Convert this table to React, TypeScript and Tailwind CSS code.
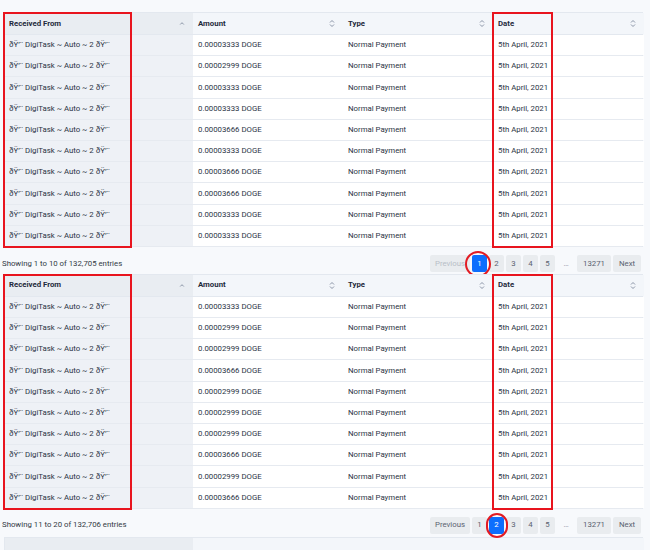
import React from "react";

const NAME = "ðŸ’¨ DigiTask ~ Auto ~ 2 ðŸ’¨";

const blocks = [
	{
		amounts: ["3333", "2999", "3333", "3333", "3666", "3333", "3666", "3666", "3333", "3333"],
		info: "Showing 1 to 10 of 132,705 entries",
		page: 1,
		footer: "h-[27px] pt-[7px]",
	},
	{
		amounts: ["3333", "2999", "2999", "3666", "2999", "2999", "2999", "3666", "2999", "3666"],
		info: "Showing 11 to 20 of 132,706 entries",
		page: 2,
		footer: "h-[28px] pt-[5px]",
	},
];

const cols = "grid grid-cols-[188px_150px_150px_151px]";

function SortBoth() {
	return (
		<svg width="6" height="9" viewBox="0 0 6 9" className="text-[#8a94a6]">
			<path d="M1 3.5 L3 1.5 L5 3.5 M1 5.5 L3 7.5 L5 5.5" fill="none" stroke="currentColor" strokeWidth="1" />
		</svg>
	);
}

function SortUp() {
	return (
		<svg width="6" height="9" viewBox="0 0 6 9" className="text-[#8a94a6]">
			<path d="M1.2 5.5 L3 3.7 L4.8 5.5" fill="none" stroke="currentColor" strokeWidth="1" />
		</svg>
	);
}

function Header() {
	return (
		<div className={`${cols} h-[22px] border-b border-[#e3e8ef] text-[#1f2a3c] font-bold`}>
			<div className="flex items-center justify-between pl-1 pr-2 bg-[#e9edf2]">
				<span>Received From</span>
				<SortUp />
			</div>
			<div className="flex items-center justify-between pl-[5px] pr-2 bg-[#f3f6fa]">
				<span>Amount</span>
				<SortBoth />
			</div>
			<div className="flex items-center justify-between pl-[5px] pr-2 bg-[#f3f6fa]">
				<span>Type</span>
				<SortBoth />
			</div>
			<div className="flex items-center justify-between pl-[5px] pr-2 bg-[#f3f6fa]">
				<span>Date</span>
				<SortBoth />
			</div>
		</div>
	);
}

function Pager({ page }: { page: number }) {
	const btn = "h-[17px] flex items-center justify-center rounded-[2px]";
	const idle = "bg-[#e9ecef] text-[#5a6270]";
	const nums = [1, 2, 3, 4, 5];
	return (
		<div className="relative flex items-center gap-[2px] mr-[9px]">
			<div className={`${btn} w-[40px] bg-[#e9ecef] ${page === 1 ? "text-[#b8bec7]" : "text-[#5a6270]"}`}>
				Previous
			</div>
			{nums.map((n) => (
				<div key={n} className={`${btn} w-[15px] ${n === page ? "bg-[#0d6efd] text-white" : idle}`}>
					{n}
				</div>
			))}
			<div className="w-[18px] text-center text-[#8a919c]">…</div>
			<div className={`${btn} w-[34px] ${idle}`}>13271</div>
			<div className={`${btn} w-[28px] ${idle}`}>Next</div>
			<div
				className={`absolute border-2 border-[#e21b23] rounded-full ${
					page === 1
						? "left-[35px] top-[-4px] w-[26px] h-[26px]"
						: "left-[56px] top-[-4px] w-[22px] h-[25px]"
				}`}
			/>
		</div>
	);
}

function Block({ amounts, info, page, footer }: (typeof blocks)[number]) {
	return (
		<div>
			<div className="relative ml-1 w-[639px] border-x border-t border-[#e3e8ef]">
				<Header />
				{amounts.map((a, i) => (
					<div key={i} className={`${cols} h-[21.2px] border-b border-[#e6eaf0] text-[#2b3445]`}>
						<div className="flex items-center pl-1 bg-[#eef1f6]">{NAME}</div>
						<div className="flex items-center pl-[5px] bg-white">0.0000{a} DOGE</div>
						<div className="flex items-center pl-[5px] bg-white">Normal Payment</div>
						<div className="flex items-center pl-[5px] bg-white">5th April, 2021</div>
					</div>
				))}
				<div className="absolute left-[-2px] top-[-1px] bottom-[-1px] w-[129px] border-2 border-[#e8141e]" />
				<div className="absolute left-[487px] top-[-1px] bottom-[-1px] w-[61px] border-2 border-[#e8141e]" />
			</div>
			<div className={`${footer} flex items-center justify-between pl-[2px] text-[#333a44]`}>
				<span>{info}</span>
				<Pager page={page} />
			</div>
		</div>
	);
}

export default function App() {
	return (
		<div className="w-[650px] h-[550px] overflow-hidden bg-[#f7f9fc] pt-3 font-['Roboto',sans-serif] text-[7.8px] leading-none">
			{blocks.map((b) => (
				<Block key={b.page} {...b} />
			))}
			<div className={`${cols} ml-1 w-[639px] h-[22px] border-x border-t border-[#e3e8ef]`}>
				<div className="bg-[#e9edf2]" />
				<div className="col-span-3 bg-[#f3f6fa]" />
			</div>
		</div>
	);
}
